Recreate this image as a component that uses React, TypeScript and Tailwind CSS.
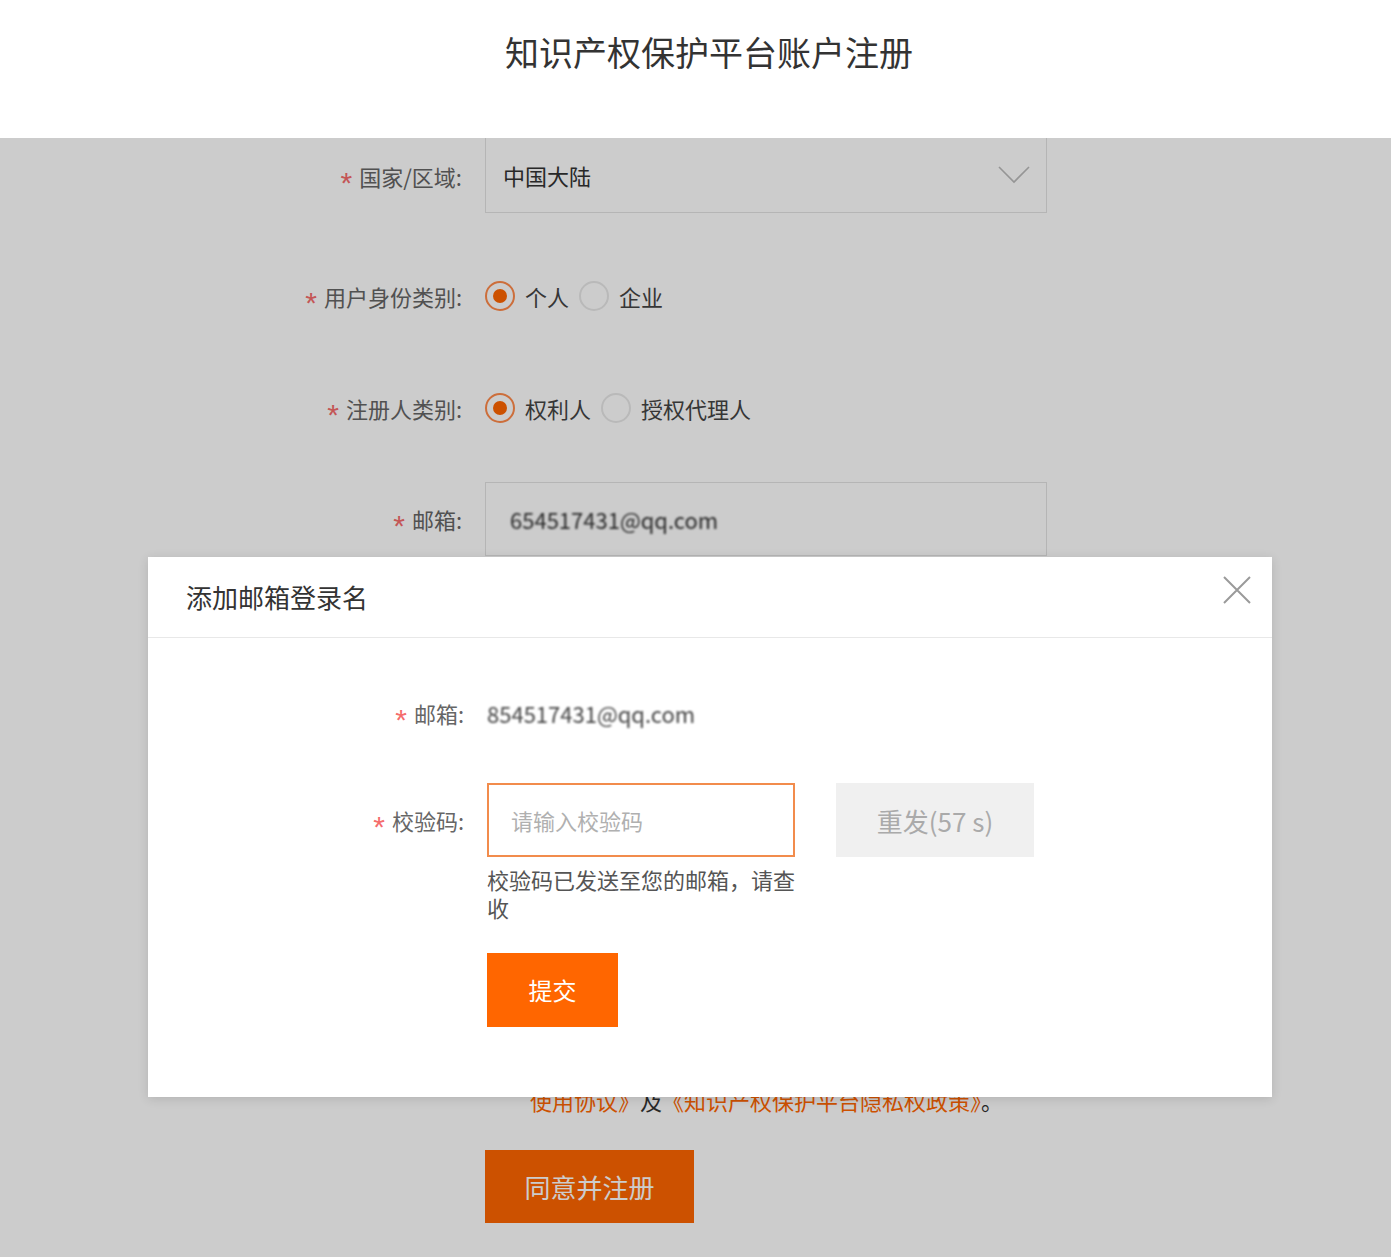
import React from "react";

const FONT = '"Noto Sans CJK SC", "Noto Sans", "Liberation Sans", sans-serif';

function Star() {
  return (
    <span
      className="mr-[7px] inline-block translate-y-[7px] text-[30px] leading-[20px] text-[#f56c6c]"
      style={{ fontFamily: '"Liberation Sans", sans-serif' }}
    >
      *
    </span>
  );
}

function Label({ text }: { text: string }) {
  return (
    <div className="w-[300px] shrink-0 text-right text-[22px] leading-[30px] text-[#666]">
      <Star />
      {text}
    </div>
  );
}

function Radio({ checked, label }: { checked: boolean; label: string }) {
  return (
    <div className="flex items-center">
      <span
        className={
          checked
            ? "flex h-[30px] w-[30px] items-center justify-center rounded-full border-2 border-[#ff8a4a] bg-white"
            : "flex h-[30px] w-[30px] items-center justify-center rounded-full border-2 border-[#e8e8e8] bg-white"
        }
      >
        {checked ? <span className="h-[14px] w-[14px] rounded-full bg-[#ff6600]" /> : null}
      </span>
      <span className="ml-[10px] text-[22px] leading-[30px] text-[#444]">{label}</span>
    </div>
  );
}

export default function App() {
  return (
    <div className="relative h-[1257px] w-full overflow-hidden bg-white" style={{ fontFamily: FONT }}>
      {/* header */}
      <header className="flex h-[138px] justify-center bg-white pl-[27px] pt-[31px]">
        <h1 className="text-[34px] font-normal leading-[42px] text-[#333]">知识产权保护平台账户注册</h1>
      </header>

      {/* form */}
      <main className="ml-[162px]">
        <div className="flex items-center">
          <Label text="国家/区域:" />
          <div className="ml-[23px] flex h-[75px] w-[562px] items-center justify-between border border-t-0 border-[#e3e3e3] bg-white pl-[17px] pr-[16px]">
            <span className="text-[22px] text-[#333]">中国大陆</span>
            <svg width="32" height="18" viewBox="0 0 32 18" fill="none">
              <path d="M1 1 L16 16 L31 1" stroke="#bbbbbb" strokeWidth="1.6" />
            </svg>
          </div>
        </div>

        <div className="mt-[63px] flex h-[40px] items-center">
          <Label text="用户身份类别:" />
          <div className="ml-[23px] flex items-center gap-[10px]">
            <Radio checked label="个人" />
            <Radio checked={false} label="企业" />
          </div>
        </div>

        <div className="mt-[72px] flex h-[40px] items-center">
          <Label text="注册人类别:" />
          <div className="ml-[23px] flex items-center gap-[10px]">
            <Radio checked label="权利人" />
            <Radio checked={false} label="授权代理人" />
          </div>
        </div>

        <div className="mt-[54px] flex items-center">
          <Label text="邮箱:" />
          <div className="ml-[23px] flex h-[74px] w-[562px] items-center border border-[#e3e3e3] bg-white pl-[24px]">
            <span className="text-[22px] text-[#333] blur-[1.2px]">654517431@qq.com</span>
          </div>
        </div>

        <div className="h-[499px]" />

        <p className="ml-[323px] text-[22px] leading-[30px] text-[#333]">
          <span className="text-[#ff6600]">我已阅读并同意《知识产权保护平台</span>
          <br />
          <span className="ml-[45px] text-[#ff6600]">使用协议》</span>及<span className="text-[#ff6600]">《知识产权保护平台隐私权政策》</span>。
        </p>

        <button className="ml-[323px] mt-[35px] flex h-[73px] w-[209px] items-center justify-center bg-[#ff6600] text-[26px] text-white">
          同意并注册
        </button>
      </main>

      {/* mask */}
      <div className="absolute inset-x-0 bottom-0 top-[138px] bg-black/20" />

      {/* modal */}
      <div className="absolute left-[148px] top-[557px] h-[540px] w-[1124px] bg-white shadow-[0_2px_10px_rgba(0,0,0,0.12)]">
        <div className="flex h-[81px] items-center justify-between border-b border-[#e8e8e8] pl-[38px] pr-[20px]">
          <h2 className="text-[26px] font-normal leading-[34px] text-[#333]">添加邮箱登录名</h2>
          <svg width="30" height="30" viewBox="0 0 30 30" className="-translate-y-[7px]">
            <path d="M2 2 L28 28 M28 2 L2 28" stroke="#9a9a9a" strokeWidth="2" />
          </svg>
        </div>

        <div className="pl-[16px]">
          <div className="mt-[60px] flex items-center">
            <Label text="邮箱:" />
            <span className="ml-[23px] text-[22px] leading-[30px] text-[#444] blur-[1.2px]">854517431@qq.com</span>
          </div>

          <div className="mt-[55px] flex items-start">
            <div className="flex h-[74px] items-center">
              <Label text="校验码:" />
            </div>
            <div className="ml-[23px] w-[308px]">
              <div className="flex h-[74px] items-center border-2 border-[#f28c4c] pl-[22px]">
                <span className="text-[22px] text-[#b0b0b0]">请输入校验码</span>
              </div>
              <p className="mt-[8px] w-[312px] text-[22px] leading-[28px] text-[#555]">
                校验码已发送至您的邮箱，请查收
              </p>
              <button className="mt-[32px] flex h-[74px] w-[131px] items-center justify-center bg-[#ff6600] text-[24px] text-white">
                提交
              </button>
            </div>
            <button className="ml-[41px] flex h-[74px] w-[198px] items-center justify-center bg-[#f0f0f0] text-[26px] text-[#aaa]">
              重发(57 s)
            </button>
          </div>
        </div>
      </div>
    </div>
  );
}
